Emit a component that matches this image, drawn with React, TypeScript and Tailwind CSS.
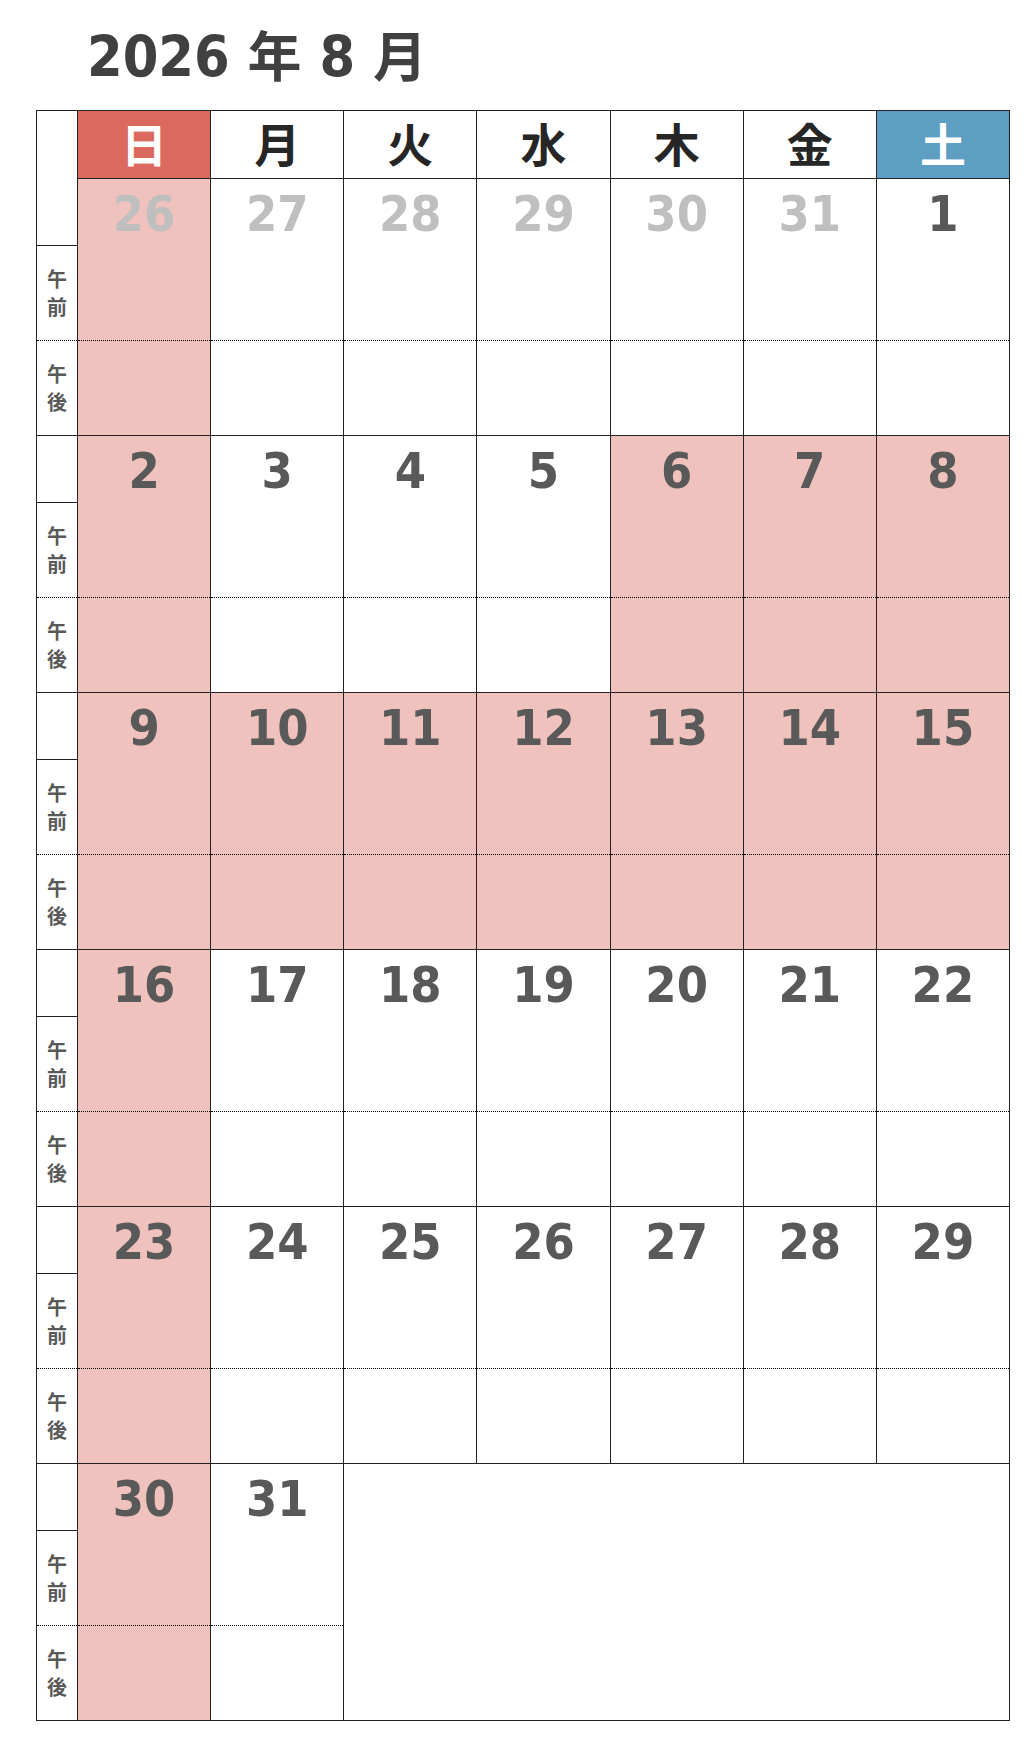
type Day = { d: number; muted?: boolean; pink?: boolean };

const weeks: Day[][] = [
  [
    { d: 26, muted: true, pink: true },
    { d: 27, muted: true },
    { d: 28, muted: true },
    { d: 29, muted: true },
    { d: 30, muted: true },
    { d: 31, muted: true },
    { d: 1 },
  ],
  [
    { d: 2, pink: true },
    { d: 3 },
    { d: 4 },
    { d: 5 },
    { d: 6, pink: true },
    { d: 7, pink: true },
    { d: 8, pink: true },
  ],
  [9, 10, 11, 12, 13, 14, 15].map((d) => ({ d, pink: true })),
  [{ d: 16, pink: true }, { d: 17 }, { d: 18 }, { d: 19 }, { d: 20 }, { d: 21 }, { d: 22 }],
  [{ d: 23, pink: true }, { d: 24 }, { d: 25 }, { d: 26 }, { d: 27 }, { d: 28 }, { d: 29 }],
  [{ d: 30, pink: true }, { d: 31 }],
];

const headers = [
  { t: "日", cls: "bg-[#dc695d] text-white" },
  { t: "月", cls: "text-[#262626]" },
  { t: "火", cls: "text-[#262626]" },
  { t: "水", cls: "text-[#262626]" },
  { t: "木", cls: "text-[#262626]" },
  { t: "金", cls: "text-[#262626]" },
  { t: "土", cls: "bg-[#5f9ec3] text-white" },
];

const numFont =
  "font-['DejaVu_Sans_Condensed','DejaVu_Sans','Noto_Sans_CJK_JP',sans-serif] font-stretch-condensed font-bold";
const jpFont = "font-['Noto_Sans_CJK_JP',sans-serif] font-bold";

function Label() {
  return (
    <div className="flex flex-col border-r border-[#222]">
      <div className="h-[67px] border-b border-[#222]" />
      <div className={`h-[95px] border-b border-dotted border-black flex items-center justify-center text-[20px] leading-[28px] text-[#595959] ${jpFont}`}>
        <div className="flex flex-col items-center">
          <span>午</span>
          <span>前</span>
        </div>
      </div>
      <div className={`h-[95px] border-b border-[#222] flex items-center justify-center text-[20px] leading-[28px] text-[#595959] ${jpFont}`}>
        <div className="flex flex-col items-center">
          <span>午</span>
          <span>後</span>
        </div>
      </div>
    </div>
  );
}

function DayCell({ day }: { day: Day }) {
  return (
    <div className={`flex flex-col border-r border-[#222] ${day.pink ? "bg-[#efc2bd]" : ""}`}>
      <div
        className={`h-[67px] pt-[10px] text-center text-[50px] leading-none ${numFont} ${
          day.muted ? "text-[#bfbfbf]" : "text-[#595959]"
        }`}
      >
        {day.d}
      </div>
      <div className="h-[95px] border-b border-dotted border-black" />
      <div className="h-[95px] border-b border-[#222]" />
    </div>
  );
}

export default function App() {
  return (
    <div className="w-[1034px] h-[1742px] bg-white">
      <h1 className={`pl-[87px] pt-[28px] h-[110px] text-[57px] leading-[58px] text-[#404040] ${numFont}`}>
        2026 <span className="text-[54px]">年</span> 8 <span className="text-[54px]">月</span>
      </h1>
      <div className="ml-[36px] w-[974px] border-l border-t border-[#222]">
        <div className="grid grid-cols-[41px_repeat(7,1fr)]">
          {/* top-left cell runs into the first week's label */}
          <div className="h-[68px] border-r border-[#222]" />
          {headers.map((h) => (
            <div
              key={h.t}
              className={`h-[68px] pb-[6px] border-r border-b border-[#222] flex items-center justify-center text-[46px] leading-none ${jpFont} ${h.cls}`}
            >
              {h.t}
            </div>
          ))}
        </div>
        {weeks.map((w, i) => (
          <div key={i} className="grid grid-cols-[41px_repeat(7,1fr)]">
            <Label />
            {w.map((day, j) => (
              <DayCell key={j} day={day} />
            ))}
            {w.length < 7 && <div className="col-span-5 border-r border-b border-[#222]" />}
          </div>
        ))}
      </div>
    </div>
  );
}
